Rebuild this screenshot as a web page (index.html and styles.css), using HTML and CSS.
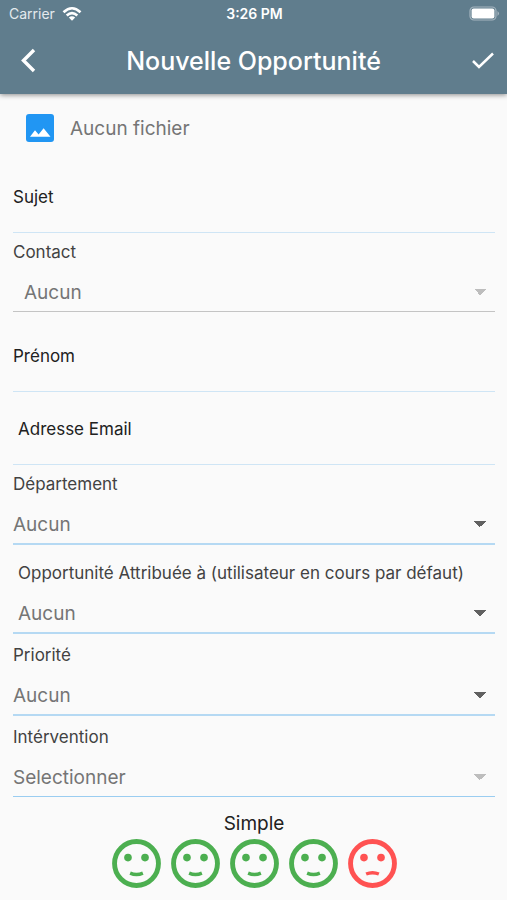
FILE: index.html
```html
<!DOCTYPE html>
<html lang="fr">
<head>
  <meta charset="utf-8">
  <meta name="viewport" content="width=device-width, initial-scale=1">
  <title>Nouvelle Opportunité</title>
  <link rel="stylesheet" href="styles.css">
</head>
<body>
  <svg class="sprite" aria-hidden="true">
    <symbol id="face-smile" viewBox="0 0 50 50">
      <circle cx="25" cy="25" r="22.400" fill="none" stroke="currentColor" stroke-width="5"/>
      <circle cx="16.300" cy="19" r="3.900" fill="currentColor"/>
      <circle cx="33.700" cy="19" r="3.900" fill="currentColor"/>
      <path d="M18.500 34.800Q25 37.600 31.500 34.800" fill="none" stroke="currentColor" stroke-width="3.400"/>
    </symbol>
    <symbol id="face-sad" viewBox="0 0 50 50">
      <circle cx="25" cy="25" r="22.400" fill="none" stroke="currentColor" stroke-width="5"/>
      <circle cx="16.300" cy="19" r="3.900" fill="currentColor"/>
      <circle cx="33.700" cy="19" r="3.900" fill="currentColor"/>
      <path d="M18.500 35.800Q25 33 31.500 35.800" fill="none" stroke="currentColor" stroke-width="3.400"/>
    </symbol>
  </svg>

  <header class="header">
    <div class="status">
      <div class="carrier">
        <span>Carrier</span>
        <svg width="20" height="16" viewBox="0 0 20 16" aria-hidden="true">
          <g fill="none" stroke="#fff" stroke-width="2.600">
            <path d="M1.500 6.300Q10 -1.800 18.500 6.300"/>
            <path d="M4.700 9.500Q10 4.600 15.300 9.500"/>
          </g>
          <path d="M6.800 11.600Q10 8.800 13.200 11.600L10 14.800Z" fill="#fff"/>
        </svg>
      </div>
      <span class="time">3:26 PM</span>
      <svg class="battery" width="31" height="15" viewBox="0 0 31 15" aria-hidden="true">
        <rect x="1" y="1" width="26" height="13" rx="4" fill="none" stroke="#a5b5bf" stroke-width="1.200"/>
        <rect x="2.600" y="2.600" width="22.800" height="9.800" rx="2" fill="#fff"/>
        <path d="M28.500 5Q31.500 7.500 28.500 10Z" fill="#a5b5bf"/>
      </svg>
    </div>
    <div class="bar">
      <button class="icon-button" type="button" aria-label="Retour">
        <svg width="16" height="26" viewBox="0 0 16 26"><path d="M14 2L3.500 12.500L14 23" fill="none" stroke="#fff" stroke-width="3.400"/></svg>
      </button>
      <h1 class="title">Nouvelle Opportunité</h1>
      <button class="icon-button" type="submit" form="opportunity" aria-label="Enregistrer">
        <svg width="24" height="20" viewBox="0 0 24 20"><path d="M2 10L8 16L22 2.500" fill="none" stroke="#fff" stroke-width="2.500"/></svg>
      </button>
    </div>
  </header>

  <form class="form" id="opportunity">
    <button class="file" type="button">
      <svg width="28" height="28" viewBox="0 0 28 28" aria-hidden="true">
        <rect width="28" height="28" rx="3" fill="#2196f3"/>
        <path d="M4 22.700L9 16.300L12.600 20.500L17.600 14.300L24.500 22.700Z" fill="#fff"/>
      </svg>
      <span>Aucun fichier</span>
    </button>

    <div class="field field-text field-spaced">
      <label for="subject">Sujet</label>
      <input id="subject" type="text">
    </div>
    <div class="field">
      <label class="soft" for="contact">Contact</label>
      <select class="line-grey indent-large" id="contact" disabled><option>Aucun</option></select>
    </div>
    <div class="field field-text field-spaced">
      <label for="firstname">Prénom</label>
      <input id="firstname" type="text">
    </div>
    <div class="field field-text">
      <label class="indent" for="email">Adresse Email</label>
      <input id="email" type="email">
    </div>
    <div class="field">
      <label class="soft" for="department">Département</label>
      <select id="department"><option>Aucun</option></select>
    </div>
    <div class="field field-assigned">
      <label class="soft indent" for="assigned">Opportunité Attribuée à (utilisateur en cours par défaut)</label>
      <select class="indent" id="assigned"><option>Aucun</option></select>
    </div>
    <div class="field field-low">
      <label class="soft" for="priority">Priorité</label>
      <select id="priority"><option>Aucun</option></select>
    </div>
    <div class="field field-low">
      <label class="soft" for="intervention">Intérvention</label>
      <select class="line-thin" id="intervention" disabled><option>Selectionner</option></select>
    </div>

    <section class="rating" aria-labelledby="rating-label">
      <h2 class="rating-label" id="rating-label">Simple</h2>
      <div class="faces">
        <button class="face" type="button" aria-label="1"><svg><use href="#face-smile"/></svg></button>
        <button class="face" type="button" aria-label="2"><svg><use href="#face-smile"/></svg></button>
        <button class="face" type="button" aria-label="3"><svg><use href="#face-smile"/></svg></button>
        <button class="face" type="button" aria-label="4"><svg><use href="#face-smile"/></svg></button>
        <button class="face face-red" type="button" aria-label="5"><svg><use href="#face-sad"/></svg></button>
      </div>
    </section>
  </form>
</body>
</html>
```
FILE: styles.css
```css
* {
  box-sizing: border-box;
}

body {
  margin: 0;
  background: #fafafa;
  color: #212121;
  font-family: Inter, Roboto, sans-serif;
}

button,
input,
select {
  margin: 0;
  padding: 0;
  border: 0;
  border-radius: 0;
  background: none;
  color: inherit;
  font: inherit;
}

button {
  cursor: pointer;
}

svg {
  display: block;
}

.sprite {
  display: none;
}

.header {
  background: #607d8d;
  color: #fff;
  box-shadow: 0 1px 5px rgba(0, 0, 0, 0.45);
}

.status {
  display: grid;
  grid-template-columns: 1fr auto 1fr;
  align-items: center;
  height: 27px;
  padding: 0 7px 0 9px;
  font-size: 14px;
}

.carrier {
  display: flex;
  align-items: center;
  gap: 7px;
  color: #e4eaed;
}

.time {
  font-weight: 600;
}

.battery {
  justify-self: end;
}

.bar {
  display: grid;
  grid-template-columns: 56px 1fr 56px;
  align-items: center;
  height: 67px;
}

.icon-button {
  display: grid;
  place-items: center;
  height: 48px;
}

.icon-button:last-child {
  justify-content: end;
  padding-right: 12px;
}

.title {
  margin: 0;
  font-size: 25px;
  font-weight: 500;
  line-height: 32px;
  text-align: center;
}

.form {
  padding: 0 12px 11px 13px;
}

.file {
  display: flex;
  align-items: center;
  gap: 16px;
  height: 59px;
  padding: 9px 13px 0;
  color: #757575;
  font-size: 19px;
}

.field {
  display: flex;
  flex-direction: column;
  padding-top: 9px;
}

.field-text {
  padding-top: 27px;
}

.field-spaced {
  padding-top: 34px;
}

.field-assigned {
  padding-top: 18px;
}

.field-low {
  padding-top: 11px;
}

label {
  font-size: 17px;
  line-height: 20px;
}

.soft {
  color: #424242;
}

.indent {
  padding-left: 5px;
}

.indent-large {
  padding-left: 11px;
}

input {
  height: 26px;
  border-bottom: 1px solid #cfe5f5;
  outline: 0;
}

select {
  appearance: none;
  height: 40px;
  margin-top: 11px;
  border-bottom: 2px solid #b5d9f3;
  background: conic-gradient(from -45deg at 50% 100%, #616161 90deg, transparent 0) no-repeat right 9px center / 12px 6px;
  color: #757575;
  font-size: 19px;
}

select:disabled {
  background-image: conic-gradient(from -45deg at 50% 100%, #bdbdbd 90deg, transparent 0);
  color: #757575;
  opacity: 1;
}

.line-thin {
  height: 39px;
  border-bottom-width: 1px;
  border-bottom-color: #9acdf1;
}

.line-grey {
  height: 39px;
  border-bottom: 1px solid #c4c4c4;
}

.rating {
  padding-top: 15px;
}

.rating-label {
  margin: 0 0 3px;
  font-size: 19px;
  font-weight: 400;
  line-height: 24px;
  text-align: center;
}

.faces {
  display: flex;
  justify-content: center;
  gap: 10px;
}

.face {
  color: #4caf50;
}

.face svg {
  width: 49px;
  height: 49px;
}

.face-red {
  color: #ff5252;
}
```
